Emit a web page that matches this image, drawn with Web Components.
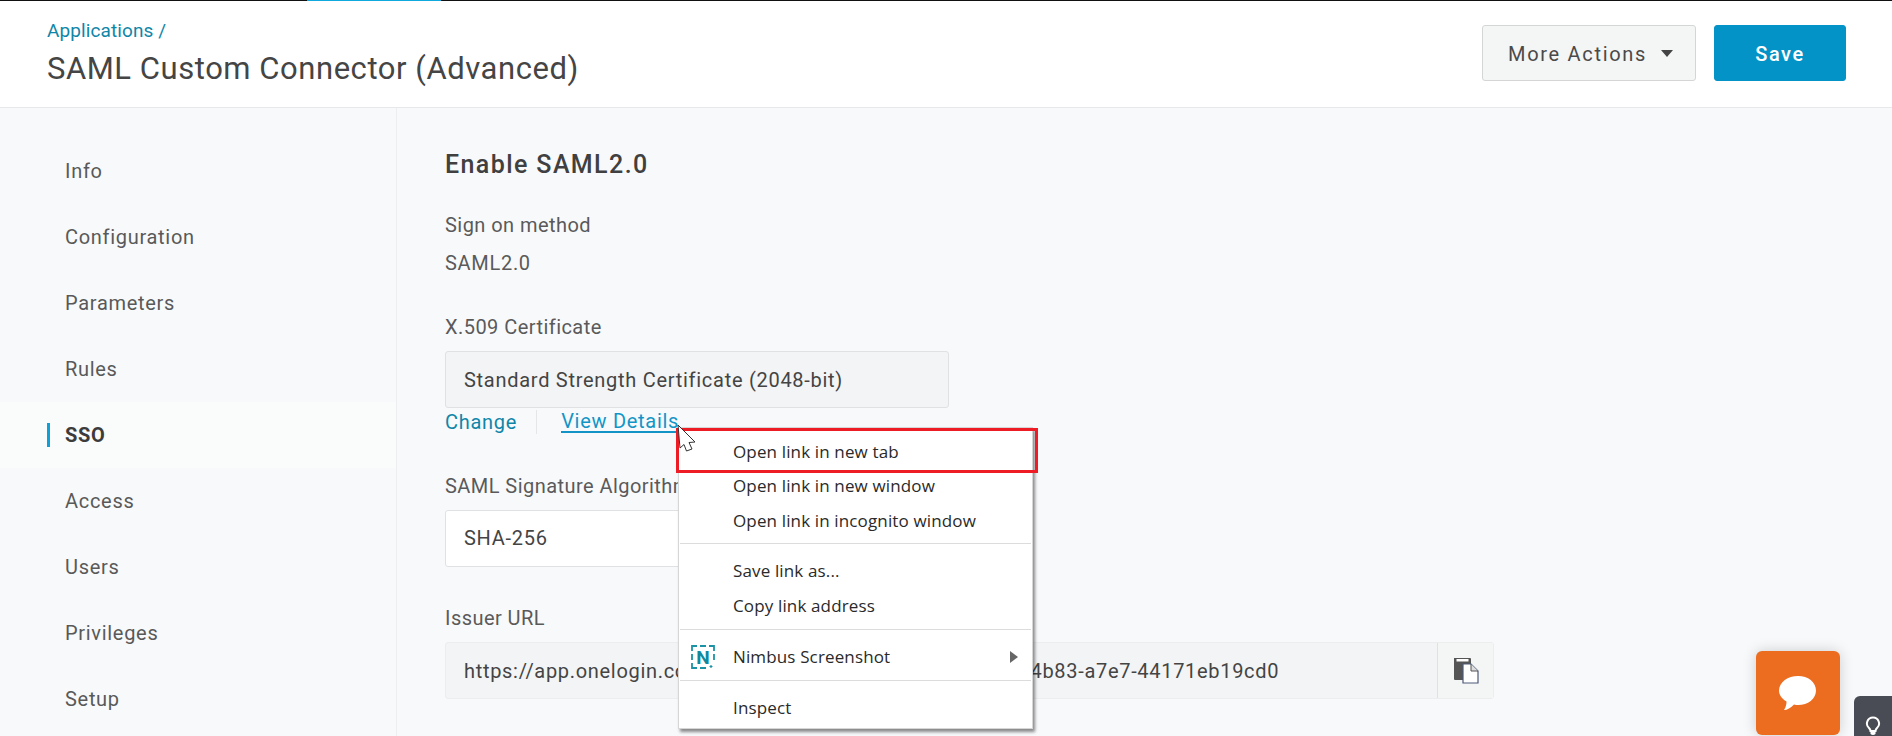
<!DOCTYPE html>
<html><head><meta charset="utf-8"><title>SAML</title>
<style>
html,body{margin:0;padding:0;height:736px;overflow:hidden;background:#f8f9fb;font-family:Roboto,sans-serif;color:#4a4a4a}
body{display:flex;flex-direction:column;position:relative}
</style></head><body>
<ol-topline></ol-topline>
<ol-header crumb="Applications /" title-text="SAML Custom Connector (Advanced)">
  <ol-button>More Actions</ol-button>
  <ol-button primary>Save</ol-button>
</ol-header>
<ol-main>
  <ol-sidebar slot="side">
    <ol-nav>Info</ol-nav><ol-nav>Configuration</ol-nav><ol-nav>Parameters</ol-nav><ol-nav>Rules</ol-nav>
    <ol-nav active>SSO</ol-nav><ol-nav>Access</ol-nav><ol-nav>Users</ol-nav><ol-nav>Privileges</ol-nav><ol-nav>Setup</ol-nav>
  </ol-sidebar>
  <ol-content>
    <h2 slot="heading">Enable SAML2.0</h2>
    <ol-field label="Sign on method" gap="14"><ol-static>SAML2.0</ol-static></ol-field>
    <ol-field label="X.509 Certificate" top="40">
      <ol-input readonly w="504">Standard Strength Certificate (2048-bit)</ol-input>
      <ol-links></ol-links>
    </ol-field>
    <ol-field label="SAML Signature Algorithm" top="38"><ol-input w="504">SHA-256</ol-input></ol-field>
    <ol-field label="Issuer URL" top="39"><ol-url>https://app.onelogin.com/saml2/metadata/a1b2c3d4-9f0e-4b83-a7e7-44171eb19cd0</ol-url></ol-field>
  </ol-content>
</ol-main>
<ol-menu></ol-menu>
<ol-chat></ol-chat>
<ol-bulb></ol-bulb>
<script>
function def(name,css,html,extra){
  customElements.define(name,class extends HTMLElement{
    connectedCallback(){
      if(this.shadowRoot)return;
      const r=this.attachShadow({mode:'open'});
      r.innerHTML='<style>'+css+'</style>'+(typeof html==='function'?html(this):html);
      if(extra)extra(this,r);
    }
  });
}
def('ol-topline',`:host{display:flex;height:1px;background:#111;flex:none;justify-content:flex-start}
 i{display:block;margin-left:307px;width:134px;height:1px;background:#0fa9dd}`,'<i></i>');
def('ol-header',`:host{display:flex;flex:none;height:106px;background:#fff;border-bottom:1px solid #e6e8ea;align-items:flex-start;justify-content:space-between;padding:0 46px 0 47px}
 .c{color:#0f86a8;font-size:19px;line-height:24px;margin-top:18px;letter-spacing:.1px}
 .t{color:#454545;font-size:31px;line-height:38px;margin-top:7px;font-weight:400;letter-spacing:.55px}
 .a{display:flex;gap:18px;margin-top:24px}`,
 h=>`<div><div class="c">${h.getAttribute('crumb')}</div><div class="t">${h.getAttribute('title-text')}</div></div><div class="a"><slot></slot></div>`);
def('ol-button',`:host{display:flex;align-items:center;justify-content:flex-start;height:56px;box-sizing:border-box;border-radius:3px;font-size:20px;letter-spacing:1.7px;color:#4a4a4a;background:#f4f5f5;border:1px solid #d4d6d6;width:214px;gap:14px;padding-left:25px;padding-top:1px}
 :host([primary]){background:#0493c7;border-color:#0493c7;color:#fff;width:132px;font-weight:500;letter-spacing:1.6px;justify-content:center;padding-left:0}
 i{display:block;width:0;height:0;border:6.5px solid transparent;border-top:7px solid #444;border-bottom:0}`,
 h=>`<span><slot></slot></span>`+(h.hasAttribute('primary')?'':'<i></i>'));
def('ol-main',`:host{display:flex;flex:1;min-height:0}`,'<slot name="side"></slot><slot></slot>');
def('ol-sidebar',`:host{display:block;flex:none;width:396px;border-right:1px solid #eceef0;padding-top:30px}`,'<slot></slot>');
def('ol-nav',`:host{display:flex;align-items:center;height:66px;font-size:20px;color:#595959;letter-spacing:.7px;padding:0 0 0 47px;box-sizing:border-box;gap:15px}
 i{display:block;width:3px;height:24px;background:transparent}
 :host([active]){background:#fafbfb;color:#3c3c3c;font-weight:700}
 :host([active]) i{background:#0fa0d8}`,'<i></i><span><slot></slot></span>');
def('ol-content',`:host{display:block;flex:1;padding:42px 0 0 48px}
 ::slotted(h2){margin:0;font-size:25px;line-height:30px;font-weight:500;color:#404040;letter-spacing:1.4px}`,'<slot name="heading"></slot><slot></slot>');
def('ol-field',`:host{display:block}
 label{display:block;font-size:20px;line-height:24px;color:#5a5a5a;letter-spacing:.45px}`,
 h=>`<label style="margin-top:${h.getAttribute('top')||33}px;margin-bottom:${h.getAttribute('gap')||12}px">${h.getAttribute('label')}</label><slot></slot>`);
def('ol-static',`:host{display:block;font-size:20px;line-height:24px;color:#5a5a5a;letter-spacing:.7px}`,'<slot></slot>');
def('ol-input',`:host{display:flex;align-items:center;box-sizing:border-box;height:57px;border:1px solid #dfe1e2;border-radius:3px;padding:0 0 2px 18px;background:#fff;font-size:20px;color:#444;letter-spacing:.72px}
 :host([readonly]){background:#f3f4f5;padding-bottom:0}`,'<slot></slot>',(h)=>{h.style.width=h.getAttribute('w')+'px'});
def('ol-links',`:host{display:flex;align-items:center;height:28px;font-size:20px;color:#0f86a8;letter-spacing:.72px}
 a{color:inherit;text-decoration:none}
 i{display:block;width:1px;height:24px;background:#e4e6e8;margin:0 24px 0 19px}
 .v{color:#1295c6;border-bottom:2px solid #1295c6;line-height:20px;align-self:flex-start;margin-top:3px}`,'<a>Change</a><i></i><a class="v">View Details</a>');
def('ol-url',`:host{display:flex;box-sizing:border-box;width:1049px;height:57px;border:1px solid #eceded;border-radius:3px;background:#f3f4f5;font-size:20px;color:#444;letter-spacing:.69px}
 .t{flex:1;display:flex;align-items:center;padding-left:18px;white-space:nowrap;overflow:hidden}
 .b{flex:none;width:56px;box-sizing:border-box;border-left:1px solid #dfe1e2;background:#f4f5f5;display:flex;align-items:center;justify-content:center}`,
 `<div class="t"><slot></slot></div><div class="b"><svg width="26" height="27" viewBox="0 0 26 27"><path d="M1 1h16q1 0 1 1v21H2q-1 0-1-1z" fill="#555"/><rect x="3.500" y="2" width="12" height="2.500" fill="#fff"/><path d="M10 7h8l7 7v12H10z" fill="#fff"/><path d="M10 7h8l7 7v12H10z" fill="none" stroke="#4c5a78" stroke-width="1.200"/><path d="M18 7v7h7" fill="#ddd" stroke="#555" stroke-width="1"/></svg></div>`);
def('ol-menu',`:host{position:absolute;left:678px;top:427px;width:355px;height:302px;box-sizing:border-box;background:#fff;border:1px solid #d6d6d6;box-shadow:2px 3px 3px rgba(0,0,0,.45);font-family:"Open Sans",sans-serif;font-size:17px;letter-spacing:.14px;color:#2a2a2a;padding-top:7px;display:block}
 .i{height:34.5px;display:flex;align-items:center;padding-left:54px;position:relative;white-space:nowrap;padding-bottom:2px;box-sizing:border-box}
 .n{padding-bottom:0}
 hr{border:0;border-top:1px solid #dcdcdc;margin:4px 1px 11px}
 .a{position:absolute;right:14px;top:11px;width:0;height:0;border-left:8px solid #666;border-top:6px solid transparent;border-bottom:6px solid transparent}
 svg.l{position:absolute;left:12px;top:5px}
 .red{position:absolute;left:-3px;top:0;width:362px;height:45px;box-sizing:border-box;border:3px solid #ee1c25;pointer-events:none}
 svg.c{position:absolute;left:-2px;top:-3px;overflow:visible}`,
 `<div class="i">Open link in new tab</div><div class="i">Open link in new window</div><div class="i">Open link in incognito window</div><hr>
 <div class="i">Save link as...</div><div class="i">Copy link address</div><hr style="margin:5px 1px 10px">
 <div class="i n"><svg class="l" width="24" height="24" viewBox="0 0 24 24"><path d="M1 6V1h5M9 1h6M18 1h5v5M23 9v6M1 9v6M1 18v5h5M9 23h6" fill="none" stroke="#1b93a5" stroke-width="1.800"/><path d="M20 20v3M18.500 21.500h3" stroke="#1b93a5" stroke-width="1.200"/><text x="12" y="18.500" text-anchor="middle" font-family="Roboto,sans-serif" font-weight="700" font-size="19" fill="#12889c">N</text></svg>Nimbus Screenshot<span class="a"></span></div><hr style="margin:6px 1px 10px">
 <div class="i">Inspect</div><div class="red"></div>
 <svg class="c" width="20" height="24" viewBox="0 0 20 24"><path d="M1 1L18 18L12 18.500L15 25L9.500 27L7 20.500L3 24z" transform="translate(0 -1)" fill="#fff" stroke="#333" stroke-width="1"/></svg>`);
def('ol-chat',`:host{position:absolute;left:1756px;top:651px;width:84px;height:84px;border-radius:6px;background:#ec6d20;box-shadow:0 0 14px rgba(0,0,0,.18);display:flex;align-items:center;justify-content:center}`,
 `<svg width="38" height="35" viewBox="0 0 38 35"><path d="M19 0C29 0 37 6 37 14.500S29 29 19 29Q17 29 15 28.500C12 32 8 34 5 34C7 31 7.500 28 7.500 25.500C3 23 0 19 0 14.500C0 6 9 0 19 0z" fill="#fff"/></svg>`);
def('ol-bulb',`:host{position:absolute;left:1854px;top:696px;width:38px;height:40px;border-radius:6px 0 0 0;background:#4a4c55;display:flex;justify-content:center;padding-top:20px;box-sizing:border-box}`,
 `<svg width="16" height="20" viewBox="0 0 16 20"><path d="M8 1.500a6 6 0 0 1 4 10.500q-1.500 1.500-1.500 3h-5q0-1.500-1.500-3A6 6 0 0 1 8 1.500z" fill="none" stroke="#fff" stroke-width="2"/><path d="M5.500 16h5v2q-2.500 2-5 0z" fill="#fff"/></svg>`);
</script>
</body></html>
